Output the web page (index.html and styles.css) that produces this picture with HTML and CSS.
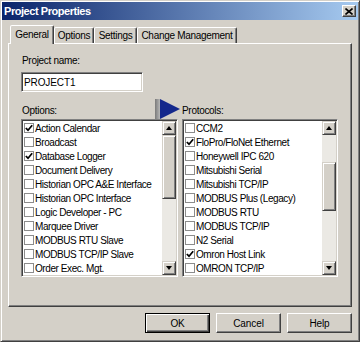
FILE: index.html
```html
<!DOCTYPE html>
<html>
<head>
<meta charset="utf-8">
<title>Project Properties</title>
<link rel="stylesheet" href="styles.css">
</head>
<body>
<div class="window">
  <div class="titlebar">
    <span class="title">Project Properties</span>
    <div class="close"><svg width="8" height="7" viewBox="0 0 8 7"><path d="M0.5 0.5 L7.5 6.5 M7.5 0.5 L0.5 6.5" stroke="#000" stroke-width="1.6"/></svg></div>
  </div>
  <div class="body">
    <div class="tabs">
      <div class="tab active">General</div>
      <div class="tab t-options">Options</div>
      <div class="tab t-settings">Settings</div>
      <div class="tab t-change">Change Management</div>
    </div>
    <div class="panel">
      <div class="lbl">Project name:</div>
      <div class="input">PROJECT1</div>
      <div class="lists">
        <div class="col">
          <div class="lbl row">Options:</div>
          <div class="listbox">
            <ul class="items">
              <li><span class="cb on"><svg width="8" height="8" viewBox="0 0 8 8"><path d="M0.8 4 L3 6.2 L7.2 1.2" fill="none" stroke="#000" stroke-width="1.7"/></svg></span>Action Calendar</li>
              <li><span class="cb"></span>Broadcast</li>
              <li><span class="cb on"><svg width="8" height="8" viewBox="0 0 8 8"><path d="M0.8 4 L3 6.2 L7.2 1.2" fill="none" stroke="#000" stroke-width="1.7"/></svg></span>Database Logger</li>
              <li><span class="cb"></span>Document Delivery</li>
              <li><span class="cb"></span>Historian OPC A&amp;E Interface</li>
              <li><span class="cb"></span>Historian OPC Interface</li>
              <li><span class="cb"></span>Logic Developer - PC</li>
              <li><span class="cb"></span>Marquee Driver</li>
              <li><span class="cb"></span>MODBUS RTU Slave</li>
              <li><span class="cb"></span>MODBUS TCP/IP Slave</li>
              <li><span class="cb"></span>Order Exec. Mgt.</li>
            </ul>
            <div class="scrollbar">
              <div class="sbtn"><span class="tri up"></span></div>
              <div class="track">
                <div class="thumb left-thumb"></div>
              </div>
              <div class="sbtn"><span class="tri down"></span></div>
            </div>
          </div>
        </div>
        <div class="col">
          <div class="lbl row proto"><svg class="arrow" width="25" height="20" viewBox="0 0 25 20"><defs><linearGradient id="g" x1="0" x2="1" y1="0" y2="0"><stop offset="0" stop-color="#7a7a7a"/><stop offset="1" stop-color="#b8b8b8"/></linearGradient></defs><rect x="0" y="0" width="5" height="20" fill="url(#g)"/><polygon points="5,0 25,10 5,20" fill="#14288c"/></svg>Protocols:</div>
          <div class="listbox">
            <ul class="items">
              <li><span class="cb"></span>CCM2</li>
              <li><span class="cb on"><svg width="8" height="8" viewBox="0 0 8 8"><path d="M0.8 4 L3 6.2 L7.2 1.2" fill="none" stroke="#000" stroke-width="1.7"/></svg></span>FloPro/FloNet Ethernet</li>
              <li><span class="cb"></span>Honeywell IPC 620</li>
              <li><span class="cb"></span>Mitsubishi Serial</li>
              <li><span class="cb"></span>Mitsubishi TCP/IP</li>
              <li><span class="cb"></span>MODBUS Plus (Legacy)</li>
              <li><span class="cb"></span>MODBUS RTU</li>
              <li><span class="cb"></span>MODBUS TCP/IP</li>
              <li><span class="cb"></span>N2 Serial</li>
              <li><span class="cb on"><svg width="8" height="8" viewBox="0 0 8 8"><path d="M0.8 4 L3 6.2 L7.2 1.2" fill="none" stroke="#000" stroke-width="1.7"/></svg></span>Omron Host Link</li>
              <li><span class="cb"></span>OMRON TCP/IP</li>
            </ul>
            <div class="scrollbar">
              <div class="sbtn"><span class="tri up"></span></div>
              <div class="track">
                <div class="gap-right"></div>
                <div class="thumb right-thumb"></div>
              </div>
              <div class="sbtn"><span class="tri down"></span></div>
            </div>
          </div>
        </div>
      </div>
    </div>
    <div class="buttons">
      <div class="btn default">OK</div>
      <div class="btn">Cancel</div>
      <div class="btn">Help</div>
    </div>
  </div>
</div>
</body>
</html>
```

FILE: styles.css
```css
* { box-sizing: border-box; }
html, body { margin: 0; padding: 0; }
body {
  background: #d4d0c8;
  font-family: "Liberation Sans", Arial, sans-serif;
  font-size: 10px;
  letter-spacing: -0.3px;
  color: #000;
}
.window {
  width: 360px;
  height: 342px;
  background: #d4d0c8;
  border: 1px solid;
  border-color: #d4d0c8 #404040 #404040 #d4d0c8;
  box-shadow: inset 1px 1px #fff, inset -1px -1px #808080;
  padding: 1px;
  display: flex;
  flex-direction: column;
}
.titlebar {
  height: 18px;
  flex: none;
  background: linear-gradient(to right, #0a246a, #a6caf0);
  display: flex;
  align-items: center;
  justify-content: space-between;
  padding: 0 2px 0 2px;
}
.title {
  color: #fff;
  font-weight: bold;
  font-size: 11px;
  letter-spacing: -0.45px;
}
.close {
  width: 14px;
  height: 12px;
  background: #d4d0c8;
  border: 1px solid;
  border-color: #fff #404040 #404040 #fff;
  box-shadow: inset -1px -1px #808080;
  display: flex;
  align-items: center;
  justify-content: center;
}
.body {
  flex: 1;
  display: flex;
  flex-direction: column;
  padding: 5px 6px 0 6px;
}
.tabs {
  display: flex;
  align-items: flex-end;
  height: 18px;
  flex: none;
  padding-left: 2px;
  position: relative;
  z-index: 1;
}
.tab {
  height: 16px;
  border: 1px solid;
  border-bottom: none;
  border-color: #fff #404040 transparent #fff;
  border-radius: 2px 2px 0 0;
  box-shadow: inset -1px 0 #808080;
  background: #d4d0c8;
  display: flex;
  align-items: center;
  justify-content: center;
  padding-bottom: 1px;
}
.tab.active {
  width: 44px;
  height: 19px;
  margin-bottom: -1px;
  padding-bottom: 2px;
}
.t-options { width: 40px; }
.t-settings { width: 43px; }
.t-change { width: 100px; }
.panel {
  height: 264px;
  flex: none;
  border: 1px solid;
  border-color: #fff #404040 #404040 #fff;
  box-shadow: inset -1px -1px #808080;
  padding: 11px 13px 0 12px;
  display: flex;
  flex-direction: column;
  align-items: flex-start;
}
.lbl {
  line-height: 12px;
  height: 12px;
  padding-left: 1px;
}
.input {
  margin-top: 5px;
  width: 122px;
  height: 20px;
  background: #fff;
  border: 1px solid;
  border-color: #808080 #fff #fff #808080;
  box-shadow: inset 1px 1px #404040, inset -1px -1px #d4d0c8;
  padding: 0 2px;
  display: flex;
  align-items: center;
  letter-spacing: -0.1px;
}
.lists {
  margin-top: 13px;
  display: grid;
  grid-template-columns: 157px 156px;
  column-gap: 4px;
}
.col {
  display: flex;
  flex-direction: column;
}
.row {
  display: flex;
  align-items: flex-start;
  margin-bottom: 2px;
}
.proto { padding-left: 0; }
.arrow {
  flex: none;
  margin: -6px 2px -2px -27px;
}
.listbox {
  height: 158px;
  background: #fff;
  border: 1px solid;
  border-color: #808080 #fff #fff #808080;
  box-shadow: inset 1px 1px #404040, inset -1px -1px #d4d0c8;
  padding: 1px;
  display: flex;
}
.items {
  list-style: none;
  margin: 0;
  padding: 0;
  flex: 1;
  min-width: 0;
  overflow: hidden;
  letter-spacing: -0.42px;
}
.items li {
  height: 14px;
  display: flex;
  align-items: center;
  gap: 1px;
  padding-left: 1px;
  white-space: nowrap;
}
.cb {
  flex: none;
  width: 10px;
  height: 10px;
  border: 1px solid #8c8c8c;
  background: #fff;
  display: flex;
  align-items: center;
  justify-content: center;
}
.scrollbar {
  width: 14px;
  flex: none;
  display: flex;
  flex-direction: column;
  background: #ebe9e4;
}
.sbtn, .thumb {
  flex: none;
  background: #d4d0c8;
  border: 1px solid;
  border-color: #d4d0c8 #404040 #404040 #d4d0c8;
  box-shadow: inset 1px 1px #fff, inset -1px -1px #808080;
}
.sbtn {
  height: 14px;
  display: flex;
  align-items: center;
  justify-content: center;
}
.track {
  flex: 1;
  display: flex;
  flex-direction: column;
}
.left-thumb { height: 64px; }
.gap-right { height: 27px; flex: none; }
.right-thumb { height: 49px; }
.tri {
  width: 0;
  height: 0;
  border-left: 3.5px solid transparent;
  border-right: 3.5px solid transparent;
}
.tri.up { border-bottom: 4px solid #000; }
.tri.down { border-top: 4px solid #000; }
.buttons {
  margin-top: 6px;
  display: flex;
  justify-content: flex-end;
  gap: 6px;
}
.btn {
  width: 65px;
  height: 20px;
  background: #d4d0c8;
  border: 1px solid;
  border-color: #fff #404040 #404040 #fff;
  box-shadow: inset -1px -1px #808080;
  display: flex;
  align-items: center;
  justify-content: center;
  letter-spacing: -0.1px;
}
.btn.default {
  border: 1px solid #000;
  box-shadow: inset 1px 1px #fff, inset -1px -1px #404040, inset -2px -2px #808080;
}
```
